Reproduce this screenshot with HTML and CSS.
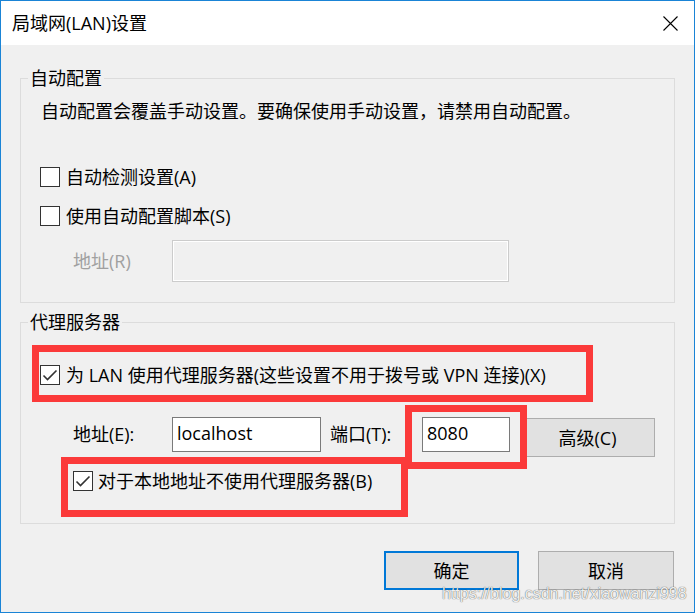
FILE: index.html
```html
<!DOCTYPE html>
<html lang="zh-CN">
<head>
<meta charset="utf-8">
<title>局域网(LAN)设置</title>
<link rel="stylesheet" href="styles.css">
</head>
<body>
<div class="window">
  <div class="titlebar">
    <span class="title">局域网(LAN)设置</span>
    <svg class="close" width="15" height="15" viewBox="0 0 15 15"><path d="M0.5 0.5L14.5 14.5M14.5 0.5L0.5 14.5" stroke="#000" stroke-width="1.1" fill="none"/></svg>
  </div>
  <div class="content">
    <fieldset class="group group-auto">
      <legend>自动配置</legend>
      <p class="desc">自动配置会覆盖手动设置。要确保使用手动设置，请禁用自动配置。</p>
      <div class="check check-first"><span class="box"></span><span>自动检测设置(A)</span></div>
      <div class="check check-second"><span class="box"></span><span>使用自动配置脚本(S)</span></div>
      <div class="field-row script-row">
        <span class="field-label disabled-label">地址(R)</span>
        <span class="textbox textbox-disabled"></span>
      </div>
    </fieldset>
    <fieldset class="group group-proxy">
      <legend>代理服务器</legend>
      <div class="check check-proxy"><span class="box checked"><svg width="20" height="20" viewBox="0 0 20 20"><path d="M3.5 10.5L7.5 14.5L16.5 5.5" stroke="#333" stroke-width="1.6" fill="none"/></svg></span><span>为 LAN 使用代理服务器(这些设置不用于拨号或 VPN 连接)(X)</span></div>
      <div class="field-row proxy-row">
        <span class="field-label addr-label">地址(E):</span>
        <span class="textbox textbox-addr">localhost</span>
        <span class="field-label port-label">端口(T):</span>
        <span class="textbox textbox-port">8080</span>
        <button class="btn btn-adv">高级(C)</button>
      </div>
      <div class="check check-local"><span class="box checked"><svg width="20" height="20" viewBox="0 0 20 20"><path d="M3.5 10.5L7.5 14.5L16.5 5.5" stroke="#333" stroke-width="1.6" fill="none"/></svg></span><span>对于本地地址不使用代理服务器(B)</span></div>
    </fieldset>
    <div class="actions">
      <button class="btn btn-ok">确定</button>
      <button class="btn btn-cancel">取消</button>
    </div>
  </div>
  <div class="annot annot-1"></div>
  <div class="annot annot-2"></div>
  <div class="annot annot-3"></div>
  <div class="watermark">https://blog.csdn.net/xiaowanzi998</div>
</div>
</body>
</html>
```
FILE: styles.css
```css
* { box-sizing: border-box; }
html, body { margin: 0; padding: 0; }
body {
  width: 695px;
  height: 613px;
  overflow: hidden;
  font-family: "Open Sans", "Noto Sans CJK SC", sans-serif;
  font-size: 18px;
  color: #000;
  background: #f0f0f0;
}
.window {
  position: relative;
  width: 695px;
  height: 613px;
  border: 1px solid #1a84d6;
  background: #f0f0f0;
  display: flex;
  flex-direction: column;
}
.titlebar {
  height: 44px;
  background: #fff;
  display: flex;
  align-items: center;
  justify-content: space-between;
  padding: 0 16px 0 11px;
}
.title { line-height: 24px; }
.close { display: block; }
.content {
  flex: 1;
  padding-top: 21px;
  display: flex;
  flex-direction: column;
}
.group {
  margin: 0 19px;
  padding: 0 0 20px 0;
  border: 1px solid #dcdcdc;
  min-width: 0;
}
.group legend {
  margin-left: 7px;
  padding: 0 2px;
  line-height: 24px;
}
.group-proxy {
  margin-top: 7px;
  padding-bottom: 30px;
}
.desc {
  margin: 9px 0 0 20px;
  line-height: 24px;
}
.check {
  display: flex;
  align-items: center;
  gap: 6px;
  height: 24px;
  line-height: 24px;
  margin-left: 19px;
}
.box {
  width: 20px;
  height: 20px;
  border: 1px solid #333;
  background: #fff;
  flex: none;
  position: relative;
}
.box svg {
  position: absolute;
  left: -1px;
  top: -1px;
}
.check-first { margin-top: 42px; }
.check-second { margin-top: 15px; }
.check-proxy { margin-top: 29px; }
.check-local { margin-top: 12px; margin-left: 52px; gap: 5px; }
.field-row {
  display: flex;
  align-items: flex-start;
  margin-left: 52px;
}
.field-label {
  line-height: 24px;
  white-space: nowrap;
}
.script-row { margin-top: 12px; }
.script-row .field-label { width: 99px; padding-top: 9px; }
.disabled-label { color: #a0a0a0; }
.textbox {
  display: block;
  background: #fff;
  border: 1px solid #7a7a7a;
  line-height: 24px;
  padding: 3px 0 0 4px;
  font-family: "Open Sans", "Noto Sans CJK SC", sans-serif;
}
.textbox-disabled {
  width: 337px;
  height: 42px;
  background: #f0f0f0;
  border: 1px solid #cccccc;
  box-shadow: inset 0 0 0 1px #fff;
}
.proxy-row { margin-top: 30px; }
.proxy-row .field-label { padding-top: 5px; }
.addr-label { width: 99px; }
.textbox-addr { width: 149px; height: 35px; }
.port-label { width: 92px; margin-left: 9px; }
.textbox-port { width: 88px; height: 35px; }
.btn {
  font-family: "Open Sans", "Noto Sans CJK SC", sans-serif;
  font-size: 18px;
  color: #000;
  background: #e1e1e1;
  border: 1px solid #adadad;
  height: 39px;
  padding: 0;
  line-height: 24px;
}
.btn-adv {
  width: 129px;
  margin-left: 16px;
  margin-top: 1px;
  padding-right: 6px;
}
.actions {
  display: flex;
  justify-content: flex-end;
  gap: 19px;
  padding-right: 20px;
  margin-top: 27px;
}
.btn-ok {
  width: 135px;
  border: 2px solid #0078d7;
}
.btn-cancel { width: 136px; }
.annot {
  position: absolute;
  border: 7px solid #fb3a3a;
  pointer-events: none;
}
.annot-1 { left: 31px; top: 344px; width: 561px; height: 57px; }
.annot-2 { left: 404px; top: 404px; width: 122px; height: 64px; }
.annot-3 { left: 60px; top: 456px; width: 347px; height: 60px; }
.watermark {
  position: absolute;
  left: 441px;
  top: 584px;
  font-family: "Liberation Sans", Arial, sans-serif;
  font-size: 16px;
  line-height: 18px;
  color: rgba(250, 250, 250, 0.95);
  text-shadow: 0 0 1px rgba(0, 0, 0, 0.6), 0 0 1px rgba(0, 0, 0, 0.3);
  white-space: nowrap;
}
```
